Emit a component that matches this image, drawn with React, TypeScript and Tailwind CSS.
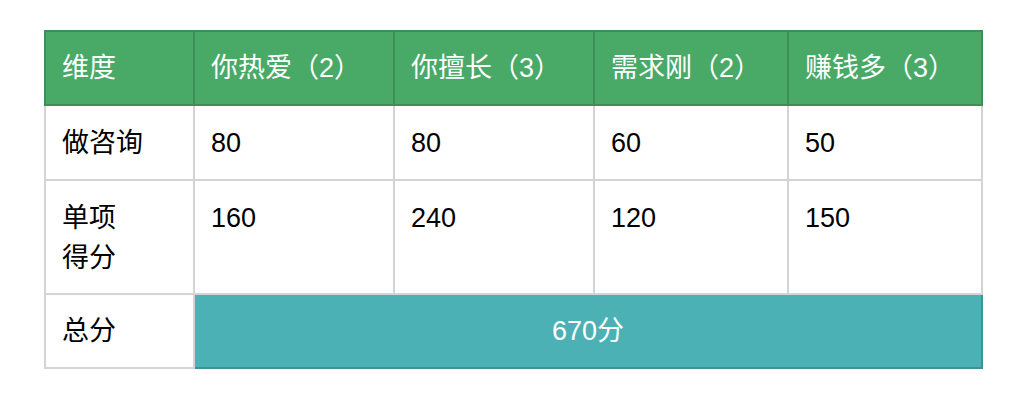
const headers = ['维度', '你热爱（2）', '你擅长（3）', '需求刚（2）', '赚钱多（3）'];
const widths = ['w-[149px]', 'w-[200px]', 'w-[200px]', 'w-[194px]', 'w-[194px]'];

const rows: { label: React.ReactNode; values: string[]; tall?: boolean }[] = [
  { label: '做咨询', values: ['80', '80', '60', '50'] },
  {
    label: (
      <>
        单项
        <br />
        得分
      </>
    ),
    values: ['160', '240', '120', '150'],
    tall: true,
  },
];

export default function App() {
  return (
    <div className="min-h-[400px] w-[1020px] bg-white pl-[44px] pt-[30px] font-['Liberation_Sans','Noto_Sans_CJK_SC',sans-serif] text-[27px] leading-[40px] text-black">
      <table className="w-[937px] table-fixed border-collapse">
        <thead>
          <tr className="h-[74px] bg-[#49a967] text-white">
            {headers.map((h, i) => (
              <th
                key={h}
                className={`${widths[i]} border-2 border-[#3d8f57] px-[16px] text-left font-normal`}
              >
                {h}
              </th>
            ))}
          </tr>
        </thead>
        <tbody>
          {rows.map((r, ri) => (
            <tr key={ri} className={r.tall ? 'h-[114px]' : 'h-[75px]'}>
              <td className="border-2 border-[#d4d4d4] px-[16px] align-top pt-[17px]">
                {r.label}
              </td>
              {r.values.map((v, vi) => (
                <td
                  key={vi}
                  className="border-2 border-[#d4d4d4] px-[16px] align-top pt-[17px]"
                >
                  {v}
                </td>
              ))}
            </tr>
          ))}
          <tr className="h-[74px]">
            <td className="border-2 border-[#d4d4d4] px-[16px]">总分</td>
            <td
              colSpan={4}
              className="border-2 border-[#3e9194] bg-[#4bb1b5] text-center text-white"
            >
              670分
            </td>
          </tr>
        </tbody>
      </table>
    </div>
  );
}
